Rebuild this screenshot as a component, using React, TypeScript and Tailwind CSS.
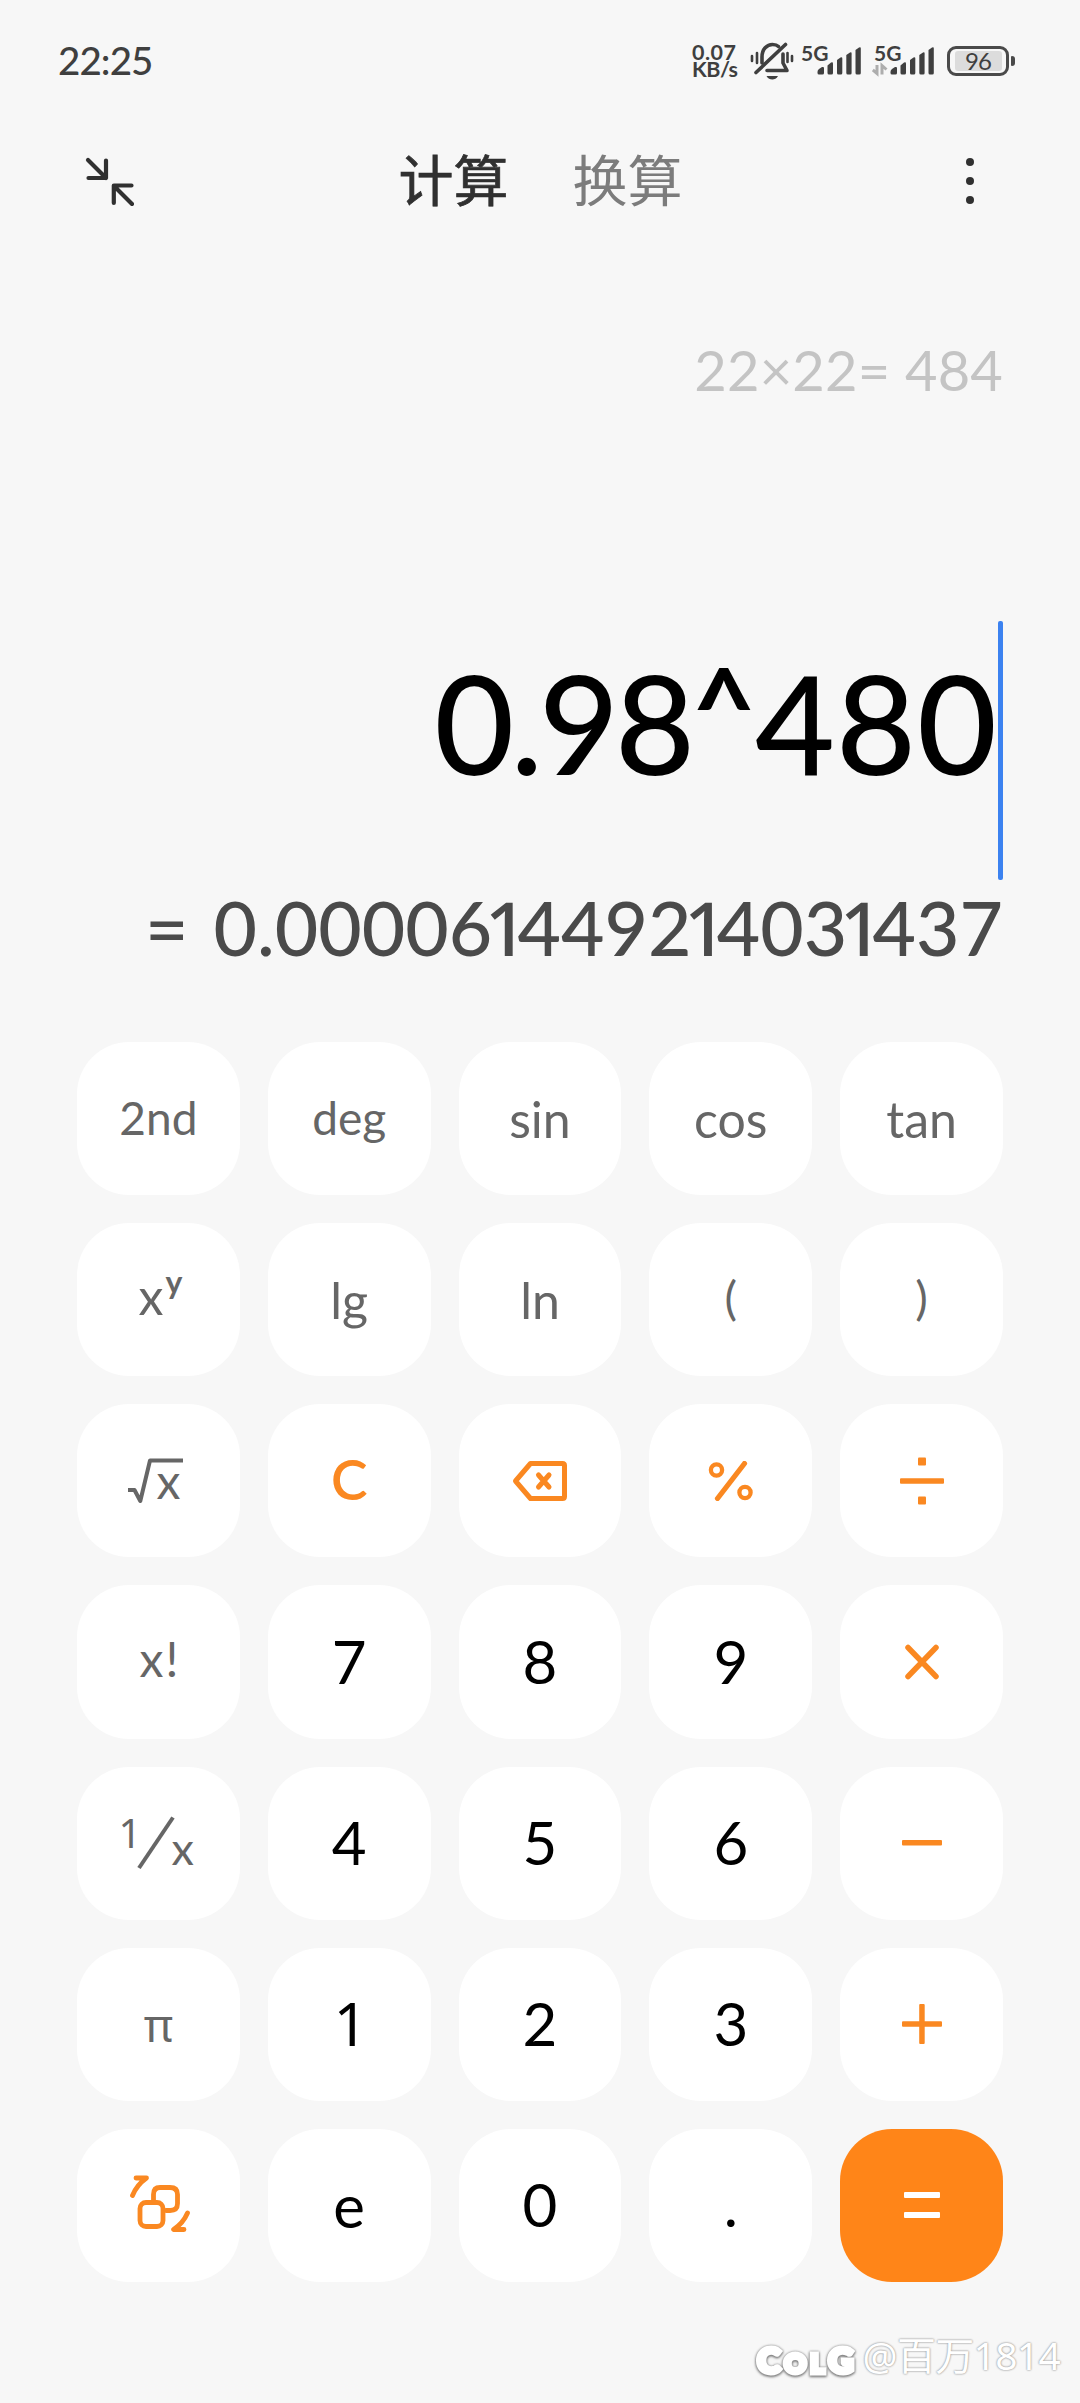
import React from 'react';

interface CalcKey {
  id: string;
  content: React.ReactNode;
  className: string;
}

const FN_SMALL = 'text-[46px] text-[#666666] pb-[1px]';
const FN = 'text-[50px] text-[#666666]';
const DIGIT = 'text-[60px] text-black pb-[2px]';
const OP = 'text-[#fa8821]';

// Figures are tabular, so the narrow "1" and the digit before it are tightened by hand
function Figures({ value }: { value: string }) {
  const chars = value.split('');
  return (
    <>
      {chars.map((char, i) => {
        if (char === '1') {
          return (
            <span key={i} className="font-['Noto_Sans',sans-serif] tracking-[-0.135em]">
              1
            </span>
          );
        }
        return (
          <span key={i} className={chars[i + 1] === '1' ? 'tracking-[-0.1em]' : undefined}>
            {char}
          </span>
        );
      })}
    </>
  );
}

function MutedBellIcon() {
  return (
    <svg width="44" height="38" viewBox="0 0 44 38" fill="none" stroke="#3f3f3f" strokeWidth="3.6" strokeLinecap="round">
      <path d="M12 21V15C12 7 17 2.500 22.500 2.500C25 2.500 27 3 28.500 4.500" />
      <path d="M33 12V21L37 28.500H17" strokeLinejoin="round" />
      <path d="M35.500 2.500L6 30.500" />
      <path d="M2 14V19M42 14V19" strokeWidth="2.600" />
      <path d="M7 11V21M37.500 11V20" strokeWidth="2.600" />
      <path d="M16.500 34H28C26.500 36.800 24.500 37.500 22.300 37.500C20 37.500 18 36.800 16.500 34Z" fill="#3f3f3f" stroke="none" />
    </svg>
  );
}

function SignalIcon({ active }: { active?: boolean }) {
  return (
    <div className="relative h-[38px] w-[62px]">
      <span className="absolute left-[2px] top-0 text-[21px] font-bold leading-none">5G</span>
      <svg width="62" height="38" viewBox="0 0 62 38" fill="#3f3f3f" className="absolute inset-0">
        <path d="M18.500 30Q18.500 28 20 27L23 25Q25 24.500 25 26V31Q25 32.500 23.500 32.500H20Q18.500 32.500 18.500 31Z" />
        <path d="M28.500 23.500L32 20.500Q34 19.500 34 21.500V31Q34 32.500 32.500 32.500H30Q28.500 32.500 28.500 31Z" />
        <path d="M38 18L41.500 15.500Q43.300 14.500 43.300 16.500V31Q43.300 32.500 41.800 32.500H39.500Q38 32.500 38 31Z" />
        <path d="M47.300 13L51 10.500Q52.600 9.500 52.600 11.500V31Q52.600 32.500 51.100 32.500H48.800Q47.300 32.500 47.300 31Z" />
        <path d="M56.500 8L60 5.500Q61.800 4.500 61.800 6.500V31Q61.800 32.500 60.300 32.500H58Q56.500 32.500 56.500 31Z" />
        {active && (
          <path d="M5 23V31.500L0.800 28M10 32.500V23.500L14.500 27.500" fill="none" stroke="#adadad" strokeWidth="3" />
        )}
      </svg>
    </div>
  );
}

function BatteryIcon() {
  return (
    <div className="flex items-center gap-[2px]">
      <div className="flex h-[30px] w-[62px] items-center justify-center rounded-[9px] border-[3.500px] border-[#4a4a4a]">
        <div className="flex h-[20px] w-[47px] items-center justify-center rounded-[3px] bg-[#dcdcdc] text-[24px] leading-none tracking-[-1px]">
          96
        </div>
      </div>
      <div className="h-[10px] w-[4px] rounded-r-[3px] rounded-l-[1px] bg-[#4a4a4a]" />
    </div>
  );
}

function StatusBar() {
  return (
    <div className="flex h-[122px] items-center justify-between pl-[58px] pr-[65px] text-[#3f3f3f]">
      <span className="text-[38.500px] font-medium tracking-[-0.900px]">22:25</span>
      <div className="flex items-center">
        <div className="mr-[11px] w-[47px] whitespace-nowrap text-[21.500px] font-bold leading-[17px]">
          <div className="tracking-[0.500px]">0.07</div>
          <div className="tracking-[-0.500px]">KB/s</div>
        </div>
        <MutedBellIcon />
        <div className="ml-[5px]">
          <SignalIcon />
        </div>
        <div className="ml-[11px] mr-[13px]">
          <SignalIcon active />
        </div>
        <BatteryIcon />
      </div>
    </div>
  );
}

function Header() {
  return (
    <div className="flex h-[117px] items-center justify-between pl-[84px] pr-[104px]">
      <svg width="50" height="50" viewBox="0 0 50 50" fill="none" stroke="#303030" strokeWidth="4.200" strokeLinecap="round" strokeLinejoin="round">
        <path d="M4 4L22 22M22 4.500V22H4.500" />
        <path d="M48 48L30 30M47.500 29.500H29.800V47" />
      </svg>
      <div className="-ml-[17px] flex gap-[64px] text-[55px] leading-none">
        <span className="text-[#303030] [-webkit-text-stroke:0.7px_#303030]">计算</span>
        <span className="text-[#7c7c7c]">换算</span>
      </div>
      <svg width="12" height="50" viewBox="0 0 12 50" fill="#303030">
        <circle cx="6" cy="6" r="4" />
        <circle cx="6" cy="25" r="4" />
        <circle cx="6" cy="44" r="4" />
      </svg>
    </div>
  );
}

function Display() {
  return (
    <div className="flex h-[803px] flex-col items-end pr-[77px]">
      <div className="mt-[96px] h-[70px] whitespace-pre text-[56px] leading-[70px] tracking-[0.200px] text-[#c4c4c4]">
        22×22= 484
      </div>
      <div className="mt-[216px] flex h-[259px] items-center">
        <span className="whitespace-nowrap pb-[58px] text-[138px] font-medium leading-none text-black">
          <span className="tracking-[-4px]">0.9</span>
          <span className="tracking-[-3px]">8</span>
          <span className="align-[28px] text-[110px] font-bold leading-[0] tracking-[-1px]">^</span>
          <span className="tracking-[1px]">480</span>
        </span>
        <span className="h-full w-[5px] rounded-[2px] bg-[#3c82f0]" />
      </div>
      <div className="mt-[2px] whitespace-pre text-[75px] font-medium leading-[90px] text-[#4a4a4a]">
        <span className="tracking-[3px]">= </span>
        <Figures value="0.000061449214031437" />
      </div>
    </div>
  );
}

function BackspaceIcon() {
  return (
    <svg width="56" height="44" viewBox="0 0 56 44" fill="none" stroke="currentColor" strokeWidth="5" strokeLinejoin="round" strokeLinecap="round">
      <path d="M3.500 22L18.500 4.500H50.500Q52.500 4.500 52.500 6.500V37.500Q52.500 39.500 50.500 39.500H18.500Z" />
      <path d="M26.500 16L37 28M37 16L26.500 28" />
    </svg>
  );
}

function PercentIcon() {
  return (
    <svg width="46" height="40" viewBox="0 0 46 40" fill="none" stroke="currentColor">
      <circle cx="8.500" cy="9" r="5.600" strokeWidth="4.300" />
      <circle cx="37" cy="31.500" r="5.600" strokeWidth="4.300" />
      <path d="M9.500 37.500L36.500 2.500" strokeWidth="5.200" strokeLinecap="round" />
    </svg>
  );
}

function DivideIcon() {
  return (
    <svg width="44" height="48" viewBox="0 0 44 48" fill="currentColor">
      <rect x="18" y="0.500" width="8" height="8" rx="1" />
      <rect x="0" y="21.300" width="44" height="5.400" rx="1" />
      <rect x="18" y="39.500" width="8" height="8" rx="1" />
    </svg>
  );
}

function TimesIcon() {
  return (
    <svg width="36" height="36" viewBox="0 0 36 36" stroke="currentColor" strokeWidth="5.500" strokeLinecap="round">
      <path d="M4 3.500L32 32.500M32 3.500L4 32.500" />
    </svg>
  );
}

function MinusIcon() {
  return (
    <svg width="40" height="6" viewBox="0 0 40 6" fill="currentColor">
      <rect width="40" height="5.500" rx="1" />
    </svg>
  );
}

function PlusIcon() {
  return (
    <svg width="40" height="40" viewBox="0 0 40 40" fill="currentColor">
      <rect y="17.200" width="40" height="5.500" rx="1" />
      <rect x="17.200" width="5.500" height="40" rx="1" />
    </svg>
  );
}

function EqualsIcon() {
  return (
    <svg width="36" height="26" viewBox="0 0 36 26" fill="currentColor">
      <rect width="36" height="6" rx="1" />
      <rect y="20" width="36" height="6" rx="1" />
    </svg>
  );
}

function SwapIcon() {
  return (
    <svg width="62" height="60" viewBox="0 0 62 60" fill="none" stroke="currentColor" strokeWidth="4.800" strokeLinecap="round" strokeLinejoin="round">
      <path d="M7 5H17.500C10.500 10 6.500 15 3.500 22.500" />
      <path d="M58.500 40C55.500 47 51.500 52 44.500 56.500H55" />
      <rect x="11" y="29.500" width="23" height="24" rx="6" />
      <path d="M24.500 27V21.500Q24.500 14.500 31 14.500H41Q48.500 14.500 48.500 21.500V30.500Q48.500 37.500 41 37.500H37" />
    </svg>
  );
}

function SquareRoot() {
  return (
    <div className="relative ml-[-4px] h-[48px] w-[56px]">
      <svg width="56" height="48" viewBox="0 0 56 48" fill="none" stroke="#666666" strokeWidth="4" className="absolute inset-0">
        <path d="M0 33H6.500L12.300 44L22 3.500H55" strokeLinejoin="round" />
      </svg>
      <span className="absolute left-[28px] top-[-6px] text-[48px] leading-[60px]">x</span>
    </div>
  );
}

function Reciprocal() {
  return (
    <div className="relative h-[56px] w-[72px]">
      <span className="absolute left-[-4px] top-[-9px] font-['Noto_Sans',sans-serif] text-[40px] leading-[54px]">1</span>
      <svg width="72" height="56" viewBox="0 0 72 56" stroke="#666666" strokeWidth="4" className="absolute inset-0">
        <path d="M17 53L51 2.500" />
      </svg>
      <span className="absolute left-[49px] top-[5px] text-[45px] leading-[56px]">x</span>
    </div>
  );
}

const keys: CalcKey[] = [
  { id: '2nd', content: '2nd', className: FN_SMALL },
  { id: 'deg', content: 'deg', className: FN_SMALL },
  { id: 'sin', content: 'sin', className: FN },
  { id: 'cos', content: 'cos', className: FN },
  { id: 'tan', content: 'tan', className: FN },
  {
    id: 'pow',
    content: (
      <span className="flex items-start pb-[8px] leading-[60px]">
        x<span className="-mt-[4px] ml-[2px] text-[32px] font-bold leading-[40px]">y</span>
      </span>
    ),
    className: FN + ' pl-[4px]',
  },
  { id: 'lg', content: 'lg', className: FN },
  { id: 'ln', content: 'ln', className: FN },
  { id: 'open', content: '(', className: 'text-[47px] text-[#666666] pb-[4px]' },
  { id: 'close', content: ')', className: 'text-[47px] text-[#666666] pb-[4px]' },
  { id: 'sqrt', content: <SquareRoot />, className: FN },
  { id: 'clear', content: 'C', className: 'text-[55px] font-semibold text-[#fa8821] pb-[2px]' },
  { id: 'backspace', content: <BackspaceIcon />, className: OP },
  { id: 'percent', content: <PercentIcon />, className: OP },
  { id: 'divide', content: <DivideIcon />, className: OP },
  { id: 'factorial', content: 'x!', className: 'text-[48px] text-[#666666] pb-[6px] pl-[3px] tracking-[2px]' },
  { id: '7', content: '7', className: DIGIT },
  { id: '8', content: '8', className: DIGIT },
  { id: '9', content: '9', className: DIGIT },
  { id: 'times', content: <TimesIcon />, className: OP },
  { id: 'reciprocal', content: <Reciprocal />, className: FN },
  { id: '4', content: '4', className: DIGIT },
  { id: '5', content: '5', className: DIGIT },
  { id: '6', content: '6', className: DIGIT },
  { id: 'minus', content: <MinusIcon />, className: OP },
  { id: 'pi', content: 'π', className: "font-['Noto_Sans',sans-serif] text-[45px] text-[#666666]" },
  { id: '1', content: '1', className: "font-['Noto_Sans',sans-serif] text-[60px] text-black pl-[3px] pb-[3px]" },
  { id: '2', content: '2', className: DIGIT },
  { id: '3', content: '3', className: DIGIT },
  { id: 'plus', content: <PlusIcon />, className: OP },
  { id: 'swap', content: <SwapIcon />, className: 'text-[#fa8821] pb-[5px] pl-[3px]' },
  { id: 'e', content: 'e', className: 'text-[60px] text-black' },
  { id: '0', content: '0', className: DIGIT },
  { id: 'dot', content: '.', className: DIGIT },
];

function Keypad() {
  return (
    <div className="grid h-[1240px] grid-cols-5 grid-rows-7 gap-[28px] px-[77px]">
      {keys.map((key) => (
        <button
          key={key.id}
          type="button"
          className={`flex items-center justify-center rounded-[52px] bg-white leading-none ${key.className}`}
        >
          {key.content}
        </button>
      ))}
      <button type="button" className="flex items-center justify-center rounded-[52px] bg-[#ff8518] text-white">
        <EqualsIcon />
      </button>
    </div>
  );
}

function Watermark() {
  return (
    <div className="flex h-[121px] items-center justify-end pr-[20px] pt-[23px] text-white">
      <span className="mt-[10px] mr-[5px] text-[35px] font-black leading-none tracking-[4px] [-webkit-text-stroke:5px_white] [filter:drop-shadow(0_1px_1px_#777)_drop-shadow(0_0_1px_#999)]">
        C<span className="text-[27px]">OL</span>G
      </span>
      <span className="font-['Noto_Sans','Noto_Sans_CJK_SC',sans-serif] text-[39px] font-normal leading-none tracking-[-0.700px] [text-shadow:0_0_2px_#999,0_0_2px_#aaa]">
        @百万1814
      </span>
    </div>
  );
}

export default function App() {
  return (
    <div className="flex h-[2403px] w-[1080px] flex-col overflow-hidden bg-[#f7f7f7] font-[Lato,'Noto_Sans_CJK_SC',sans-serif]">
      <StatusBar />
      <Header />
      <Display />
      <Keypad />
      <Watermark />
    </div>
  );
}
